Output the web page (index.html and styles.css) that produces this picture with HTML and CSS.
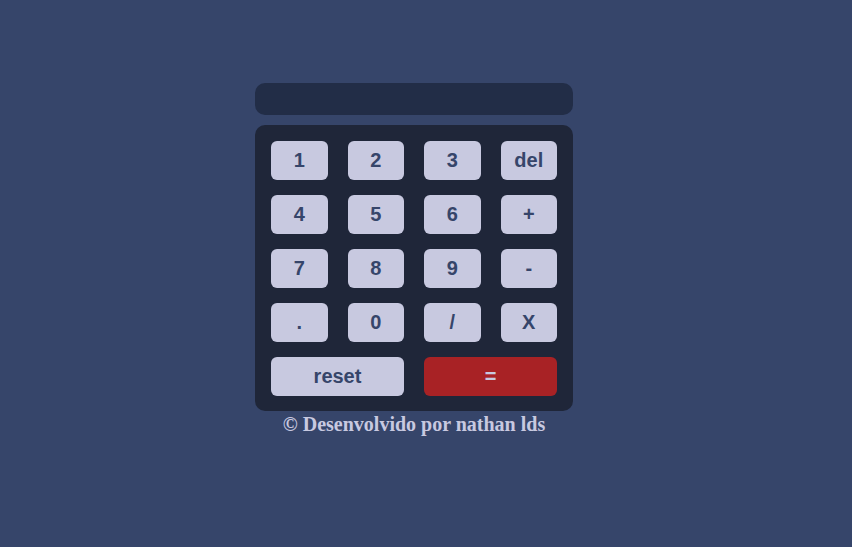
FILE: index.html
```html
<!DOCTYPE html>
<html lang="pt">
<head>
<meta charset="utf-8">
<title>Calculadora</title>
<link rel="stylesheet" href="styles.css">
</head>
<body>
<main class="calc">
  <div class="display"></div>
  <div class="keypad">
    <button class="key">1</button>
    <button class="key">2</button>
    <button class="key">3</button>
    <button class="key">del</button>
    <button class="key">4</button>
    <button class="key">5</button>
    <button class="key">6</button>
    <button class="key">+</button>
    <button class="key">7</button>
    <button class="key">8</button>
    <button class="key">9</button>
    <button class="key">-</button>
    <button class="key">.</button>
    <button class="key">0</button>
    <button class="key">/</button>
    <button class="key">X</button>
    <button class="key wide">reset</button>
    <button class="key wide equals">=</button>
  </div>
  <footer class="credit">© Desenvolvido por nathan lds</footer>
</main>
</body>
</html>
```
FILE: styles.css
```css
html, body {
  margin: 0;
  padding: 0;
}
body {
  background: #36456a;
  min-height: 547px;
  padding-right: 24px;
}
.calc {
  width: 318px;
  margin: 0 auto;
  padding-top: 83px;
  display: flex;
  flex-direction: column;
}
.display {
  height: 32px;
  background: #222d47;
  border-radius: 10px;
}
.keypad {
  margin-top: 10px;
  background: #1f2639;
  border-radius: 10px;
  padding: 16px 16px 15px;
  display: grid;
  grid-template-columns: repeat(4, 1fr);
  grid-auto-rows: 39px;
  column-gap: 20px;
  row-gap: 15px;
}
.key {
  border: none;
  border-radius: 6px;
  background: #c8c9e0;
  color: #36456a;
  font-family: "Liberation Sans", Arial, sans-serif;
  font-weight: bold;
  font-size: 20px;
  padding: 0;
  margin: 0;
}
.wide {
  grid-column: span 2;
}
.equals {
  background: #a82225;
  color: #c8c9e0;
}
.credit {
  text-align: center;
  font-family: "Liberation Serif", "Times New Roman", serif;
  font-weight: bold;
  font-size: 20px;
  color: #c8c9e0;
  margin-top: 1px;
  line-height: 24px;
}
```
